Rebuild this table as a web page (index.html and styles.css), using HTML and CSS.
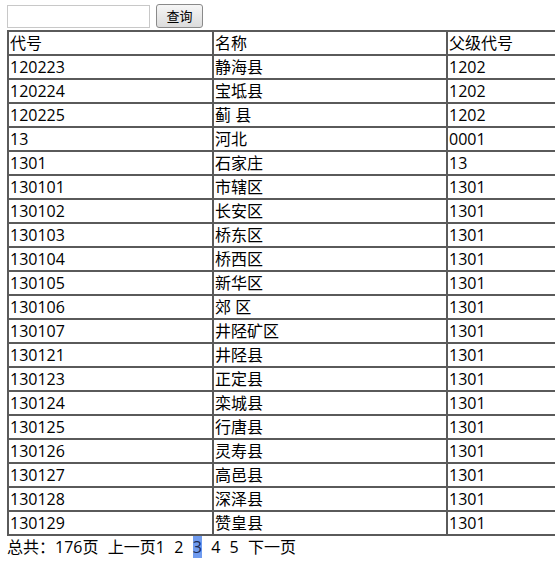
FILE: index.html
```html
<!DOCTYPE html>
<html>
<head>
<meta charset="utf-8">
<link rel="stylesheet" href="styles.css">
</head>
<body>
<div class="search">
  <input class="search-input" type="text">
  <button class="search-btn">查询</button>
</div>
<table class="grid">
  <colgroup><col class="c1"><col class="c2"><col class="c3"></colgroup>
  <tr><td>代号</td><td>名称</td><td>父级代号</td></tr>
  <tr><td>120223</td><td>静海县</td><td>1202</td></tr>
  <tr><td>120224</td><td>宝坻县</td><td>1202</td></tr>
  <tr><td>120225</td><td>蓟 县</td><td>1202</td></tr>
  <tr><td>13</td><td>河北</td><td>0001</td></tr>
  <tr><td>1301</td><td>石家庄</td><td>13</td></tr>
  <tr><td>130101</td><td>市辖区</td><td>1301</td></tr>
  <tr><td>130102</td><td>长安区</td><td>1301</td></tr>
  <tr><td>130103</td><td>桥东区</td><td>1301</td></tr>
  <tr><td>130104</td><td>桥西区</td><td>1301</td></tr>
  <tr><td>130105</td><td>新华区</td><td>1301</td></tr>
  <tr><td>130106</td><td>郊 区</td><td>1301</td></tr>
  <tr><td>130107</td><td>井陉矿区</td><td>1301</td></tr>
  <tr><td>130121</td><td>井陉县</td><td>1301</td></tr>
  <tr><td>130123</td><td>正定县</td><td>1301</td></tr>
  <tr><td>130124</td><td>栾城县</td><td>1301</td></tr>
  <tr><td>130125</td><td>行唐县</td><td>1301</td></tr>
  <tr><td>130126</td><td>灵寿县</td><td>1301</td></tr>
  <tr><td>130127</td><td>高邑县</td><td>1301</td></tr>
  <tr><td>130128</td><td>深泽县</td><td>1301</td></tr>
  <tr><td>130129</td><td>赞皇县</td><td>1301</td></tr>
</table>
<div class="pager">总共：176页&nbsp; 上一页1&nbsp; 2&nbsp; <span class="sel">3</span>&nbsp; 4&nbsp; 5&nbsp; 下一页</div>
</body>
</html>
```
FILE: styles.css
```css
html, body {
  margin: 0;
  padding: 0;
}
body {
  padding: 4px 7px;
  width: 700px;
  font-family: "Open Sans", "Noto Sans CJK SC", sans-serif;
  font-size: 16px;
  color: #000;
  background: #fff;
}
.search {
  display: flex;
  align-items: center;
  gap: 6px;
  height: 24px;
}
.search-input {
  box-sizing: border-box;
  width: 143px;
  height: 23px;
  border: 1px solid #c8c8c8;
  margin: 0;
  padding: 0 2px;
}
.search-btn {
  box-sizing: border-box;
  width: 47px;
  height: 24px;
  margin: 0;
  padding: 0;
  border: 1px solid #8a8a8a;
  border-radius: 3px;
  background: linear-gradient(#f6f6f6, #dcdcdc);
  font-family: "Noto Sans CJK SC", sans-serif;
  font-size: 13px;
  line-height: 20px;
  color: #000;
}
.grid {
  margin-top: 2px;
  border-collapse: collapse;
  border: 1px solid #555;
  table-layout: fixed;
  width: 690px;
}
.c1 { width: 205px; }
.c2 { width: 234px; }
.grid td {
  border: 2px solid #5a5a5a;
  padding: 0 1px;
  height: 22px;
  line-height: 22px;
  white-space: nowrap;
}
.pager {
  margin-top: 0;
  line-height: 22px;
  word-spacing: 0.5px;
}
.sel {
  background: #6f9bef;
  color: #1a2a55;
}
```
